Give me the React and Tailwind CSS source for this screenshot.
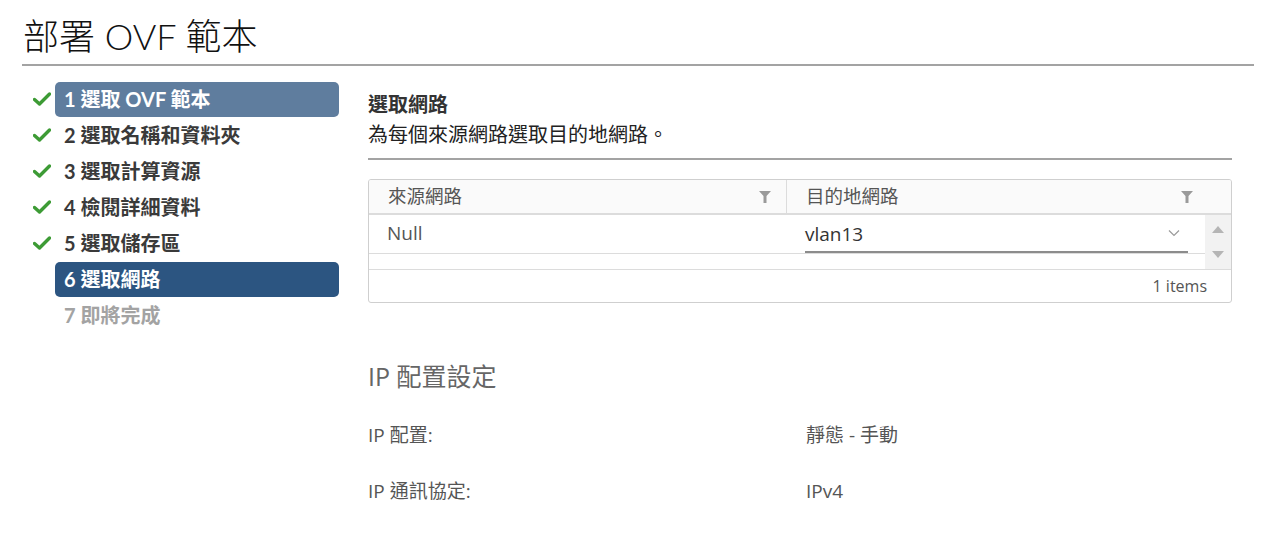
import React from 'react';

const font = { fontFamily: '"Lato", "Noto Sans CJK TC", sans-serif' };
const wide = { fontFamily: '"Open Sans", "Noto Sans CJK TC", sans-serif' };

const steps = [
  { n: 1, label: '選取 OVF 範本', done: true, state: 'visited' },
  { n: 2, label: '選取名稱和資料夾', done: true },
  { n: 3, label: '選取計算資源', done: true },
  { n: 4, label: '檢閱詳細資料', done: true },
  { n: 5, label: '選取儲存區', done: true },
  { n: 6, label: '選取網路', state: 'active' },
  { n: 7, label: '即將完成', state: 'disabled' },
];

function Check() {
  return (
    <svg width="18" height="14" viewBox="0 0 18 14" className="shrink-0">
      <path d="M1.5 7.5 L6.5 12 L16.5 2" fill="none" stroke="#3d9b35" strokeWidth="3.4" strokeLinecap="round" strokeLinejoin="round" />
    </svg>
  );
}

function Filter() {
  return (
    <svg width="12" height="12" viewBox="0 0 12 12">
      <path d="M0 0 H12 L7.5 5 V12 H4.5 V5 Z" fill="#9a9a9a" />
    </svg>
  );
}

export default function App() {
  return (
    <div className="w-[1269px] h-[539px] bg-white overflow-hidden text-[#333]" style={font}>
      {/* Title */}
      <div className="pl-[22px] pr-[15px] pt-[15px]">
        <h1 className="text-[36px] leading-[42px] font-light text-[#111] pl-[1px]">部署 OVF 範本</h1>
        <div className="mt-[7px] h-[2px] bg-[#a3a3a3]" />
      </div>

      <div className="flex pt-[15px]">
        {/* Steps */}
        <div className="w-[368px] pl-[33px] pr-[29px] flex flex-col">
          {steps.map((s) => (
            <div key={s.n} className="flex items-center h-[36px]">
              <div className="w-[22px] flex items-center">{s.done && <Check />}</div>
              <div
                className={
                  'flex-1 h-[35px] flex items-center px-[9px] rounded-[5px] text-[20px] font-bold ' +
                  (s.state === 'visited'
                    ? 'bg-[#5f7d9e] text-white'
                    : s.state === 'active'
                    ? 'bg-[#2c5581] text-white'
                    : s.state === 'disabled'
                    ? 'text-[#a3a3a3]'
                    : 'text-[#3a3a3a]')
                }
              >
                {s.n}&nbsp;{s.label}
              </div>
            </div>
          ))}
        </div>

        {/* Content */}
        <div className="w-[864px] pt-[10px]">
          <div className="text-[20px] font-bold leading-[26px] text-[#333]">選取網路</div>
          <div className="text-[20px] leading-[26px] mt-[4px] text-[#222]">為每個來源網路選取目的地網路。</div>
          <div className="mt-[11px] h-[2px] bg-[#a3a3a3]" />

          {/* Table */}
          <div className="mt-[19px] border border-[#cfcfcf] rounded-[3px] overflow-hidden">
            <div className="flex h-[35px] bg-[#fafafa] border-b-2 border-[#dcdcdc] text-[18.5px] text-[#555]">
              <div className="w-[418px] flex items-center justify-between pl-[19px] pr-[15px] border-r border-[#dcdcdc]">
                <span>來源網路</span>
                <Filter />
              </div>
              <div className="flex-1 flex items-center justify-between pl-[19px] pr-[38px]">
                <span>目的地網路</span>
                <Filter />
              </div>
            </div>
            <div className="flex">
              <div className="flex-1">
                <div className="flex h-[39px] border-b border-[#dcdcdc] text-[19px] text-[#565656]" style={wide}>
                  <div className="w-[418px] pl-[18px] flex items-center pb-[2px]">Null</div>
                  <div className="flex-1 pl-[18px] pr-[17px]">
                    <div className="h-[38px] flex items-center justify-between border-b-2 border-[#8c8c8c] pr-[8px] text-[#333]">
                      <span className="pt-[2px]">vlan13</span>
                      <svg width="12" height="8" viewBox="0 0 12 8">
                        <path d="M1 1.5 L6 6.5 L11 1.5" fill="none" stroke="#9a9a9a" strokeWidth="1.2" />
                      </svg>
                    </div>
                  </div>
                </div>
                <div className="h-[15px]" />
              </div>
              <div className="w-[26px] bg-[#f2f2f2] flex flex-col items-center justify-between py-[11px]">
                <svg width="12" height="7" viewBox="0 0 12 7"><path d="M0 7 L6 0 L12 7 Z" fill="#b5b5b5" /></svg>
                <svg width="12" height="7" viewBox="0 0 12 7"><path d="M0 0 L6 7 L12 0 Z" fill="#b5b5b5" /></svg>
              </div>
            </div>
            <div className="h-[33px] border-t border-[#dcdcdc] flex items-center justify-end pr-[24px] text-[16px] text-[#555]" style={wide}>
              1 items
            </div>
          </div>

          {/* IP settings */}
          <div className="mt-[58px] text-[25px] leading-[30px] text-[#666]" style={wide}>IP 配置設定</div>
          <div className="mt-[31px] flex text-[19px] text-[#555] leading-[26px]" style={wide}>
            <div className="w-[438px]">IP 配置:</div>
            <div>靜態 - 手動</div>
          </div>
          <div className="mt-[30px] flex text-[19px] text-[#555] leading-[26px]" style={wide}>
            <div className="w-[438px]">IP 通訊協定:</div>
            <div>IPv4</div>
          </div>
        </div>
      </div>
    </div>
  );
}
